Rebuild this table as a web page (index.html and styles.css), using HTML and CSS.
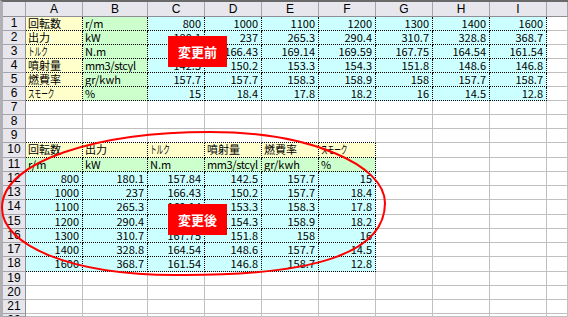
FILE: index.html
```html
<!DOCTYPE html>
<html lang="ja">
<head>
<meta charset="utf-8">
<title>Sheet</title>
<link rel="stylesheet" href="styles.css">
</head>
<body>
<div class="page">
  <div class="sheet">
    <div class="c h"></div><div class="c h">A</div><div class="c h">B</div><div class="c h">C</div><div class="c h">D</div><div class="c h">E</div><div class="c h">F</div><div class="c h">G</div><div class="c h">H</div><div class="c h">I</div><div class="c h"></div>

    <div class="c rh">1</div><div class="c d y">回転数</div><div class="c d g">r/m</div><div class="c d b">800</div><div class="c d b">1000</div><div class="c d b">1100</div><div class="c d b">1200</div><div class="c d b">1300</div><div class="c d b">1400</div><div class="c d b">1600</div><div class="c"></div>
    <div class="c rh">2</div><div class="c d y">出力</div><div class="c d g">kW</div><div class="c d b">180.1</div><div class="c d b">237</div><div class="c d b">265.3</div><div class="c d b">290.4</div><div class="c d b">310.7</div><div class="c d b">328.8</div><div class="c d b">368.7</div><div class="c"></div>
    <div class="c rh">3</div><div class="c d y"><span class="hw">トルク</span></div><div class="c d g">N.m</div><div class="c d b">157.84</div><div class="c d b">166.43</div><div class="c d b">169.14</div><div class="c d b">169.59</div><div class="c d b">167.75</div><div class="c d b">164.54</div><div class="c d b">161.54</div><div class="c"></div>
    <div class="c rh">4</div><div class="c d y">噴射量</div><div class="c d g tight">mm3/stcyl</div><div class="c d b">142.5</div><div class="c d b">150.2</div><div class="c d b">153.3</div><div class="c d b">154.3</div><div class="c d b">151.8</div><div class="c d b">148.6</div><div class="c d b">146.8</div><div class="c"></div>
    <div class="c rh">5</div><div class="c d y">燃費率</div><div class="c d g">gr/kwh</div><div class="c d b">157.7</div><div class="c d b">157.7</div><div class="c d b">158.3</div><div class="c d b">158.9</div><div class="c d b">158</div><div class="c d b">157.7</div><div class="c d b">158.7</div><div class="c"></div>
    <div class="c rh">6</div><div class="c d y"><span class="hw">スモーク</span></div><div class="c d g">%</div><div class="c d b">15</div><div class="c d b">18.4</div><div class="c d b">17.8</div><div class="c d b">18.2</div><div class="c d b">16</div><div class="c d b">14.5</div><div class="c d b">12.8</div><div class="c"></div>

    <div class="c rh">7</div><div class="c"></div><div class="c"></div><div class="c"></div><div class="c"></div><div class="c"></div><div class="c"></div><div class="c"></div><div class="c"></div><div class="c"></div><div class="c"></div>
    <div class="c rh">8</div><div class="c"></div><div class="c"></div><div class="c"></div><div class="c"></div><div class="c"></div><div class="c"></div><div class="c"></div><div class="c"></div><div class="c"></div><div class="c"></div>
    <div class="c rh">9</div><div class="c dt"></div><div class="c dt"></div><div class="c dt"></div><div class="c dt"></div><div class="c dt"></div><div class="c dt"></div><div class="c"></div><div class="c"></div><div class="c"></div><div class="c"></div>

    <div class="c rh">10</div><div class="c d y">回転数</div><div class="c d y">出力</div><div class="c d y"><span class="hw">トルク</span></div><div class="c d y">噴射量</div><div class="c d y">燃費率</div><div class="c d y"><span class="hw">スモーク</span></div><div class="c"></div><div class="c"></div><div class="c"></div><div class="c"></div>
    <div class="c rh">11</div><div class="c d g">r/m</div><div class="c d g">kW</div><div class="c d g">N.m</div><div class="c d g tight">mm3/stcyl</div><div class="c d g">gr/kwh</div><div class="c d g">%</div><div class="c"></div><div class="c"></div><div class="c"></div><div class="c"></div>
    <div class="c rh">12</div><div class="c d b">800</div><div class="c d b">180.1</div><div class="c d b">157.84</div><div class="c d b">142.5</div><div class="c d b">157.7</div><div class="c d b">15</div><div class="c"></div><div class="c"></div><div class="c"></div><div class="c"></div>
    <div class="c rh">13</div><div class="c d b">1000</div><div class="c d b">237</div><div class="c d b">166.43</div><div class="c d b">150.2</div><div class="c d b">157.7</div><div class="c d b">18.4</div><div class="c"></div><div class="c"></div><div class="c"></div><div class="c"></div>
    <div class="c rh">14</div><div class="c d b">1100</div><div class="c d b">265.3</div><div class="c d b">169.14</div><div class="c d b">153.3</div><div class="c d b">158.3</div><div class="c d b">17.8</div><div class="c"></div><div class="c"></div><div class="c"></div><div class="c"></div>
    <div class="c rh">15</div><div class="c d b">1200</div><div class="c d b">290.4</div><div class="c d b">169.59</div><div class="c d b">154.3</div><div class="c d b">158.9</div><div class="c d b">18.2</div><div class="c"></div><div class="c"></div><div class="c"></div><div class="c"></div>
    <div class="c rh">16</div><div class="c d b">1300</div><div class="c d b">310.7</div><div class="c d b">167.75</div><div class="c d b">151.8</div><div class="c d b">158</div><div class="c d b">16</div><div class="c"></div><div class="c"></div><div class="c"></div><div class="c"></div>
    <div class="c rh">17</div><div class="c d b">1400</div><div class="c d b">328.8</div><div class="c d b">164.54</div><div class="c d b">148.6</div><div class="c d b">157.7</div><div class="c d b">14.5</div><div class="c"></div><div class="c"></div><div class="c"></div><div class="c"></div>
    <div class="c rh">18</div><div class="c d b">1600</div><div class="c d b">368.7</div><div class="c d b">161.54</div><div class="c d b">146.8</div><div class="c d b">158.7</div><div class="c d b">12.8</div><div class="c"></div><div class="c"></div><div class="c"></div><div class="c"></div>

    <div class="c rh">19</div><div class="c"></div><div class="c"></div><div class="c"></div><div class="c"></div><div class="c"></div><div class="c"></div><div class="c"></div><div class="c"></div><div class="c"></div><div class="c"></div>
    <div class="c rh">20</div><div class="c"></div><div class="c"></div><div class="c"></div><div class="c"></div><div class="c"></div><div class="c"></div><div class="c"></div><div class="c"></div><div class="c"></div><div class="c"></div>
    <div class="c rh">21</div><div class="c"></div><div class="c"></div><div class="c"></div><div class="c"></div><div class="c"></div><div class="c"></div><div class="c"></div><div class="c"></div><div class="c"></div><div class="c"></div>
    <div class="c rh">22</div><div class="c"></div><div class="c"></div><div class="c"></div><div class="c"></div><div class="c"></div><div class="c"></div><div class="c"></div><div class="c"></div><div class="c"></div><div class="c"></div>
  </div>

  <div class="tag tag-before">変更前</div>
  <div class="tag tag-after">変更後</div>
  <svg class="ring" width="568" height="317" viewBox="0 0 568 317">
    <path d="M 2 208 C 2 160 100 132 210 132 C 310 132 385 165 385 203 C 385 255 310 276 175 275 C 70 275 2 245 2 208 Z" fill="none" stroke="#ff0000" stroke-width="2"/>
  </svg>
</div>
</body>
</html>
```
FILE: styles.css
```css
html, body {
  margin: 0;
  padding: 0;
  background: #ffffff;
}

.page {
  position: relative;
  width: 568px;
  height: 317px;
  overflow: hidden;
}

.sheet {
  box-sizing: border-box;
  width: 568px;
  height: 317px;
  border-top: 2px solid #6a6a6a;
  border-left: 3px solid #b0b0b4;
  display: grid;
  grid-template-columns: 23px 57px 65px repeat(7, 57px) 1fr;
  grid-template-rows: 15px
    14px 14px 14px 14px 14px 14px
    14px 14px 14px
    15px 14px 14px 14px 15px 14px 14px 14px 15px
    14px 14px 14px 1fr;
  font-family: "Noto Sans CJK JP", sans-serif;
  font-size: 11px;
  color: #000000;
  overflow: hidden;
}

.c {
  box-sizing: border-box;
  border-right: 1px solid #c0c0c0;
  border-bottom: 1px solid #c0c0c0;
  padding: 0 2px;
  line-height: 13px;
  white-space: nowrap;
  overflow: hidden;
}

.tight {
  letter-spacing: -0.4px;
}

.hw {
  display: inline-block;
  transform: scaleX(0.6);
  transform-origin: left center;
}

.h {
  background: #e6e6ec;
  border-right-color: #a4a4aa;
  border-bottom-color: #8e8e94;
  text-align: center;
  font-family: "Liberation Sans", sans-serif;
  font-size: 12px;
  line-height: 14px;
}

.rh {
  background: #e6e6ec;
  border-right-color: #8e8e94;
  border-bottom-color: #a4a4aa;
  text-align: center;
  font-family: "Liberation Sans", sans-serif;
  font-size: 12px;
  line-height: 13px;
  padding: 0;
}

.d {
  border-right: 1px dotted #000000;
  border-bottom: 1px dotted #000000;
}

.dt {
  border-bottom: 1px dotted #000000;
}

.y {
  background: #ffffcc;
}

.g {
  background: #ccffcc;
}

.b {
  background: #ccffff;
  text-align: right;
  padding-right: 3px;
}

.tag {
  position: absolute;
  width: 59px;
  height: 31px;
  background: #ff0000;
  color: #ffffff;
  font-family: "Noto Sans CJK JP", sans-serif;
  font-weight: bold;
  font-size: 13px;
  line-height: 31px;
  text-align: center;
}

.tag-before {
  left: 168px;
  top: 36px;
}

.tag-after {
  left: 168px;
  top: 204px;
}

.ring {
  position: absolute;
  left: 0;
  top: 0;
  pointer-events: none;
}
```
